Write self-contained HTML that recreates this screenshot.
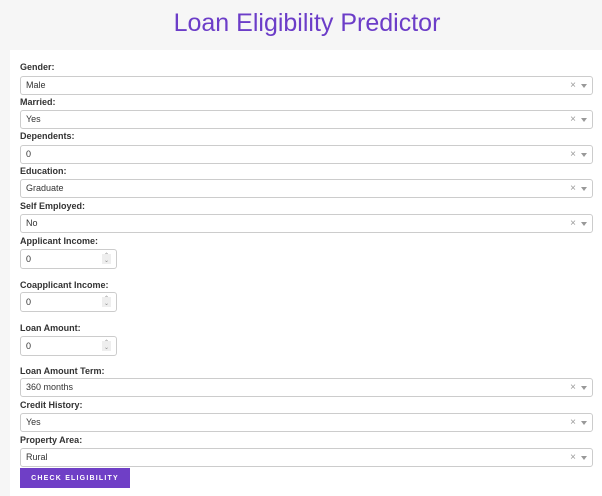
<!DOCTYPE html>
<html><head><style>
*{box-sizing:border-box;margin:0;padding:0}
body{width:602px;height:496px;background:#f6f6f6;font-family:"Liberation Sans",Arial,sans-serif;position:relative;overflow:hidden}
h1{position:absolute;left:0;width:614px;top:7px;text-align:center;font-weight:normal;font-size:25px;color:#6c3dc8;line-height:32px}
.card{position:absolute;left:10px;top:50px;width:592px;height:446px;background:#fff}
.l{position:absolute;left:20px;font-size:9px;font-weight:bold;color:#333}
.s{position:absolute;left:20px;width:573px;height:19px;border:1px solid #ccc;border-radius:3px;font-size:9px;color:#333;padding-left:5px;line-height:17px;background:#fff}
.s:after{content:"×";position:absolute;right:16px;top:0;color:#999;font-size:10px}
.s:before{content:"";position:absolute;right:5px;top:7px;border:3px solid transparent;border-top:4px solid #999}
.n{position:absolute;left:20px;width:97px;height:20px;border:1px solid #ccc;border-radius:3px;font-size:9px;color:#333;padding-left:5px;line-height:18px}
.n i{position:absolute;right:5px;top:4px;width:9px;height:10px;background:#eee;font-style:normal;font-size:6px;color:#888;text-align:center;line-height:5px}
.b{position:absolute;left:20px;top:468px;width:110px;height:20px;background:#6f3fc6;color:#fff;font-size:7px;font-weight:bold;letter-spacing:1.2px;text-align:center;line-height:21px}
</style></head><body>
<h1>Loan Eligibility Predictor</h1>
<div class="card"></div>
<div class="l" style="top:62px">Gender:</div><div class="s" style="top:76px">Male</div>
<div class="l" style="top:97px">Married:</div><div class="s" style="top:110px">Yes</div>
<div class="l" style="top:131px">Dependents:</div><div class="s" style="top:145px">0</div>
<div class="l" style="top:166px">Education:</div><div class="s" style="top:179px">Graduate</div>
<div class="l" style="top:201px">Self Employed:</div><div class="s" style="top:214px">No</div>
<div class="l" style="top:236px">Applicant Income:</div><div class="n" style="top:249px">0<i>⌃<br>⌄</i></div>
<div class="l" style="top:280px">Coapplicant Income:</div><div class="n" style="top:292px">0<i>⌃<br>⌄</i></div>
<div class="l" style="top:323px">Loan Amount:</div><div class="n" style="top:336px">0<i>⌃<br>⌄</i></div>
<div class="l" style="top:366px">Loan Amount Term:</div><div class="s" style="top:378px">360 months</div>
<div class="l" style="top:400px">Credit History:</div><div class="s" style="top:413px">Yes</div>
<div class="l" style="top:435px">Property Area:</div><div class="s" style="top:448px">Rural</div>
<div class="b">CHECK ELIGIBILITY</div>
</body></html>
